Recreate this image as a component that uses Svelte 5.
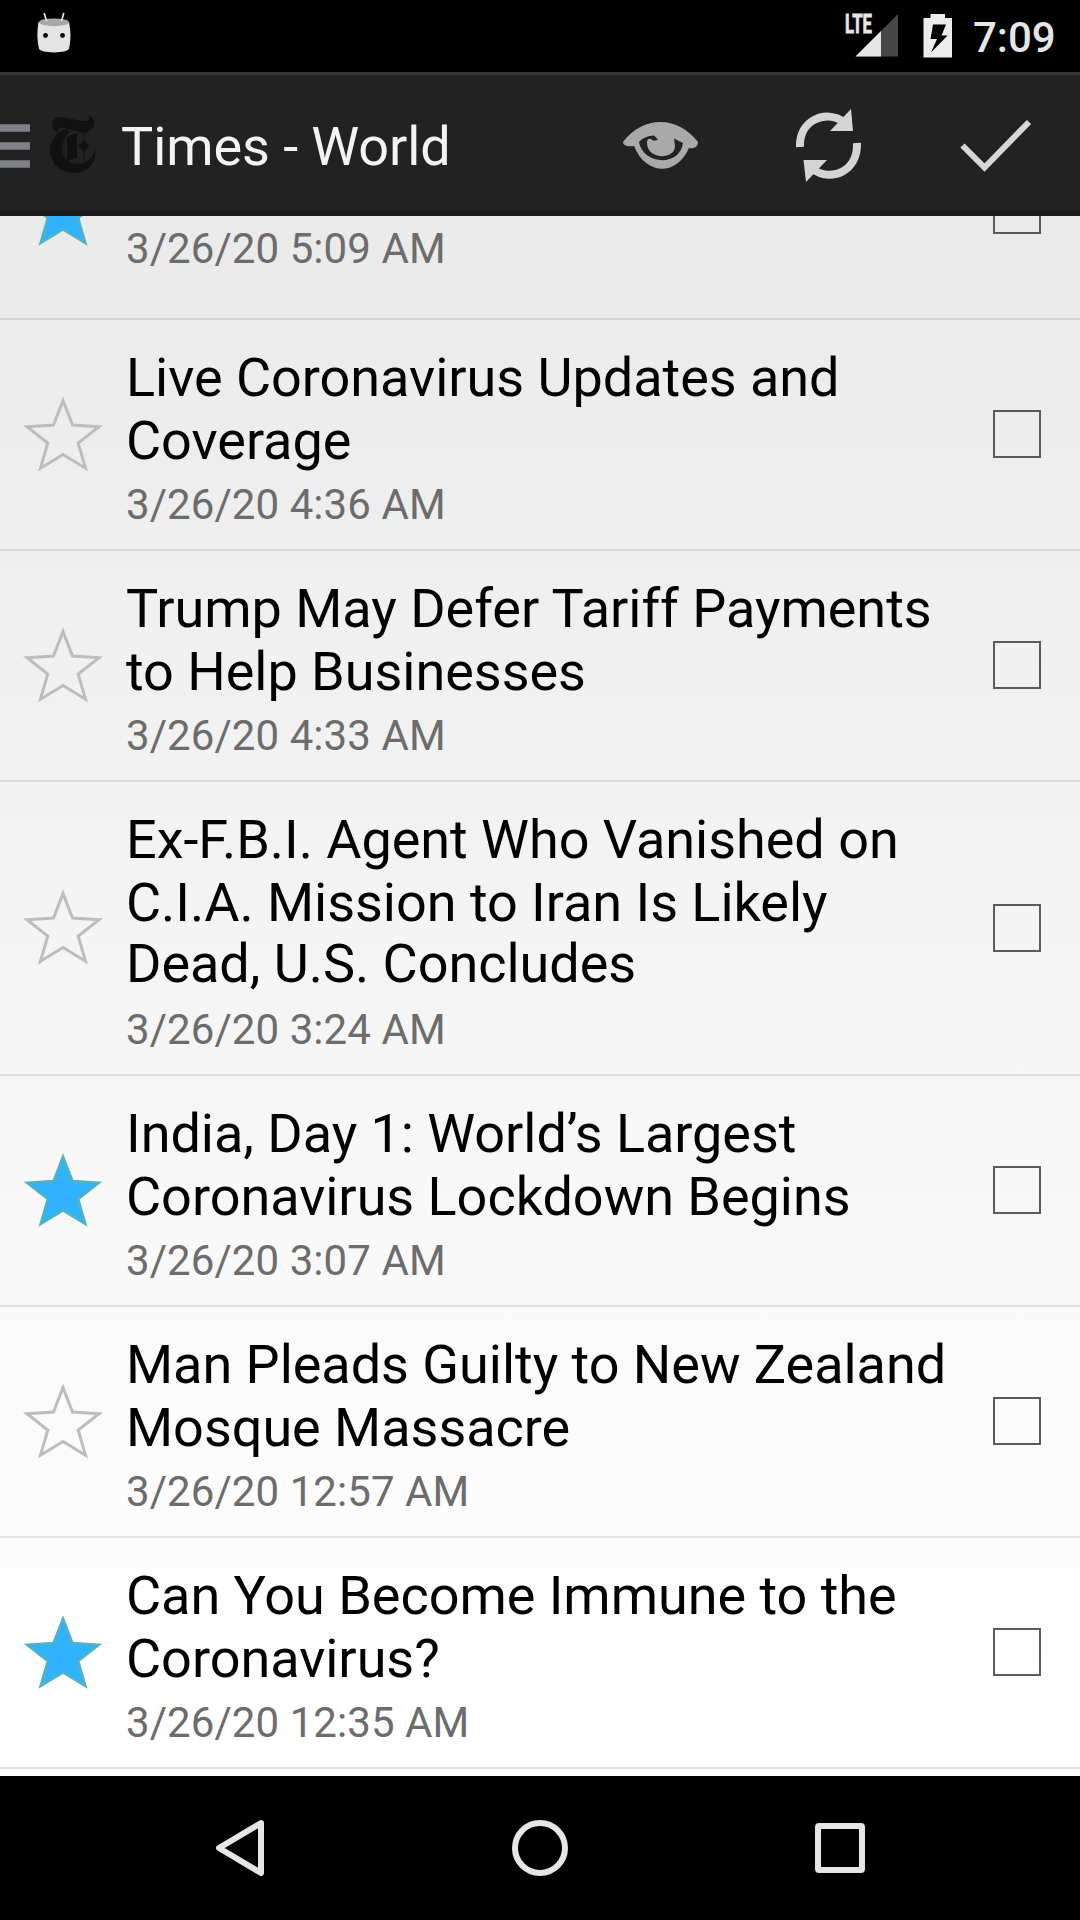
<script>
  const articles = [
    { starred: true, lines: [], date: '3/26/20 5:09 AM', partial: true },
    { starred: false, lines: ['Live Coronavirus Updates and', 'Coverage'], date: '3/26/20 4:36 AM' },
    { starred: false, lines: ['Trump May Defer Tariff Payments', 'to Help Businesses'], date: '3/26/20 4:33 AM' },
    { starred: false, lines: ['Ex-F.B.I. Agent Who Vanished on', 'C.I.A. Mission to Iran Is Likely', 'Dead, U.S. Concludes'], date: '3/26/20 3:24 AM' },
    { starred: true, lines: ['India, Day 1: World’s Largest', 'Coronavirus Lockdown Begins'], date: '3/26/20 3:07 AM' },
    { starred: false, lines: ['Man Pleads Guilty to New Zealand', 'Mosque Massacre'], date: '3/26/20 12:57 AM' },
    { starred: true, lines: ['Can You Become Immune to the', 'Coronavirus?'], date: '3/26/20 12:35 AM' }
  ];
</script>

<div class="screen">
  <header class="status">
    <svg class="droid" width="36" height="42" viewBox="0 0 36 42">
      <path d="M2.5 10Q18 16 33 10Q36 24 33 37Q31 40 18 40.500Q5 40 3 37Q0 24 2.500 10Z" fill="#e4e4e4" />
      <ellipse cx="18" cy="10.300" rx="15" ry="3.900" fill="#a8a8a8" />
      <path d="M8.200 1l2.300 8M27.800 1l-2.300 8" stroke="#e4e4e4" stroke-width="1.700" />
      <circle cx="9.500" cy="23.500" r="2.400" />
      <circle cx="26.500" cy="23.500" r="2.400" />
    </svg>
    <div class="indicators">
      <svg width="64" height="56" viewBox="-10 -10 64 56" class="signal">
        <path d="M10.500 43.500L53 1V43.500Z" fill="#474747" />
        <path d="M10.500 43.500L36 18V43.500Z" fill="#e6e6e6" />
        <text x="0" y="20.300" textLength="27" lengthAdjust="spacingAndGlyphs" class="lte">LTE</text>
      </svg>
      <svg class="battery" width="30" height="46" viewBox="0 0 30 46">
        <path d="M7.500 1H22V5H29V44.500H.500V5H7.500ZM10 11.500L7.500 26H14L8 39.500L24.500 22.500H18.500L23 11.500Z" fill="#ececec" fill-rule="evenodd" />
      </svg>
      <span class="clock">7:09</span>
    </div>
  </header>

  <div class="appbar">
    <svg class="menu" width="30" height="44" viewBox="0 0 30 44">
      <path d="M0 4H30M0 22H30M0 40H30" stroke="#808186" stroke-width="7.700" />
    </svg>
    <svg class="logo" width="46" height="58" viewBox="0 0 46 58" fill="#111">
      <path d="M37 0C43 1 46 6 43 12C40 18 34 19 27 16L14 13C9 12 7 14 8 18C0 15 0 3 10 2C17 1 29 7 36 6C40 5 40 2 37 0Z" />
      <path d="M16 14L20 17C12 23 11 32 13 40C16 47 25 51 33 48C39 46 43 41 45 34C48 46 38 58 25 58C10 58 0 48 0 35C0 24 8 17 16 14Z" />
      <path d="M17 22L27 18V43L17 46ZM34 25L39.500 31L34 37L28.500 31Z" />
      <path d="M34 14V50M14 22V43" stroke="#151515" stroke-width="1" />
    </svg>
    <h1>Times - World</h1>
    <div class="actions">
      <svg class="eye" width="76" height="48" viewBox="0 0 76 48">
        <path d="M0 20C20-6 54-7 75 20C75 25 71 27 66 26C54 54 23 54 11 24C6 25 0 24 0 20Z" fill="#a9a9a9" />
        <path d="M16 20Q21 14 31 13.500L35 17.500Q31 20 28 17Q24 16 24 21C24 38 52 38 52 24L51 16.500L60 21C57 45 20 43 16 20Z" fill="#222" />
      </svg>
      <svg width="68" height="74" viewBox="0 0 68 74">
        <path d="M5 38C4 11 31 0 49 13" stroke="#d4d4d4" stroke-width="8" fill="none" />
        <path d="M56 0L58 22H35Z" fill="#d4d4d4" />
        <path d="M62 34C63 62 37 73 19 61" stroke="#d4d4d4" stroke-width="8" fill="none" />
        <path d="M11 73L8.500 51H32Z" fill="#d4d4d4" />
      </svg>
      <svg width="72" height="54" viewBox="0 0 72 54">
        <path d="M2.500 26.500L24.500 48.500L69 3" stroke="#d6d6d6" stroke-width="6" fill="none" />
      </svg>
    </div>
  </div>

  <main class="list">
    {#each articles as article}
      <article class="row" class:partial={article.partial}>
        <svg class="star" class:on={article.starred} width="84" height="84" viewBox="0 0 84 84">
          <path d="M42 8.500L51.500 33L78 34.800L57.200 51L64.500 76.200L42 62.500L19.500 76.200L26.800 51L6 34.800L32.500 33Z" />
        </svg>
        <div class="body">
          <h2>{#each article.lines as line}<span>{line}</span>{/each}</h2>
          <time>{article.date}</time>
        </div>
        <span class="check"></span>
      </article>
    {/each}
  </main>

  <nav>
    <svg width="56" height="58" viewBox="0 0 56 58"><path d="M49 4L7 29L49 54Z" /></svg>
    <svg width="56" height="58" viewBox="0 0 56 58"><circle cx="28" cy="29" r="25" /></svg>
    <svg width="56" height="58" viewBox="0 0 56 58"><rect x="6" y="7" width="44" height="44" rx="1" /></svg>
  </nav>
</div>

<style>
  :global(body) { margin: 0; background: #000; }
  .screen {
    width: 1080px;
    height: 1920px;
    display: flex;
    flex-direction: column;
    overflow: hidden;
    background: #000;
    font-family: Roboto, "Noto Sans", sans-serif;
  }
  svg { display: block; flex: none; }
  .status {
    height: 72px;
    box-sizing: border-box;
    padding: 12px 24px 0 36px;
    display: flex;
    justify-content: space-between;
    align-items: flex-start;
  }
  .indicators { display: flex; align-items: flex-start; padding-top: 1px; }
  .signal { margin-top: -10px; }
  .lte { font: 700 26px Roboto, sans-serif; fill: #e6e6e6; stroke: #e6e6e6; stroke-width: 0.8; }
  .battery { margin-left: 24px; }
  .clock {
    width: 83px;
    margin-left: 20px;
    font-size: 42px;
    line-height: 49px;
    font-weight: 500;
    color: #e6e6e6;
  }
  .appbar {
    height: 144px;
    box-sizing: border-box;
    flex: none;
    display: flex;
    align-items: center;
    padding-right: 48px;
    background: #222;
    border-top: 3px solid #383838;
    border-bottom: 6px solid #1b1b1b;
  }
  .menu { margin-top: 6px; }
  .logo { margin: 2px 0 0 20px; }
  h1 {
    margin: 8px 0 0 25px;
    font-size: 54px;
    line-height: 63px;
    font-weight: 400;
    letter-spacing: -0.08px;
    color: #f3f3f3;
    white-space: nowrap;
  }
  .actions { display: flex; align-items: center; margin: 6px 0 0 auto; gap: 97px; }
  .eye { margin-right: -1px; }
  .list {
    height: 1560px;
    flex: none;
    overflow: hidden;
    background: linear-gradient(#eaeaea, #fff 96%);
  }
  .row {
    display: flex;
    align-items: center;
    padding: 0 39px 0 21px;
    border-bottom: 2px solid rgba(0, 0, 0, 0.1);
  }
  .row.partial { height: 216px; margin-top: -114px; }
  .star { margin-bottom: 2px; fill: none; stroke: #bdbdbd; stroke-width: 3; }
  .star.on { fill: #30b2ff; stroke: #50b4bd; stroke-width: 2.4; }
  .body { flex: 1; margin-left: 21px; padding: 26px 0 20px; }
  .partial .body { padding: 69px 0 0; }
  h2 {
    display: flex;
    flex-direction: column;
    margin: 0 0 8px;
    font-size: 54px;
    line-height: 63px;
    font-weight: 400;
    letter-spacing: -0.03px;
    color: #000;
    white-space: nowrap;
  }
  h2 span:nth-child(3) { margin: -2px 0 2px; }
  time { display: block; font-size: 42px; line-height: 49px; letter-spacing: 0.07px; color: #6c6c6c; }
  .check {
    width: 48px;
    height: 48px;
    box-sizing: border-box;
    flex: none;
    margin-bottom: 0.6px;
    border: 2px solid #5a5a5a;
  }
  nav {
    height: 144px;
    flex: none;
    display: flex;
    justify-content: space-between;
    align-items: center;
    padding: 0 212px;
  }
  nav svg { fill: none; stroke: #e6e6e6; stroke-width: 6; stroke-linejoin: round; }
</style>
